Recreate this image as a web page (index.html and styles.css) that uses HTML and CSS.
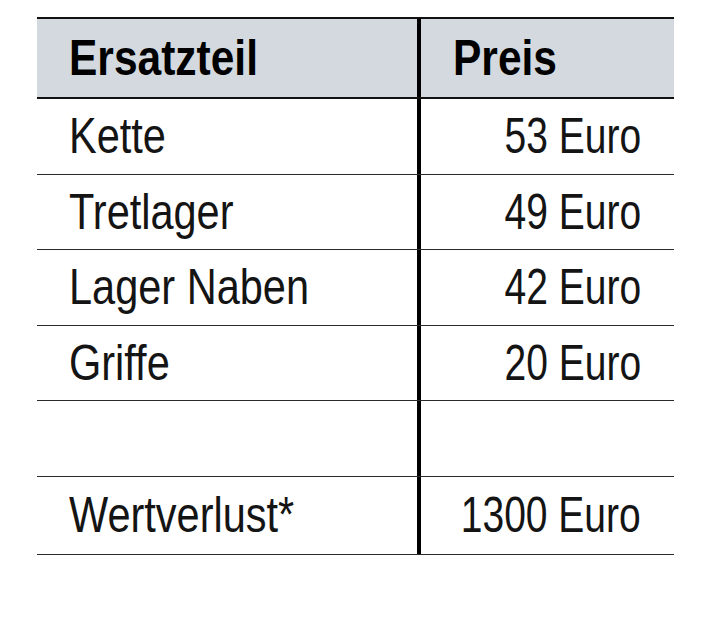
FILE: index.html
```html
<!DOCTYPE html>
<html lang="de">
<head>
<meta charset="utf-8">
<title>Ersatzteile</title>
<link rel="stylesheet" href="styles.css">
</head>
<body>
<div class="table">
  <div class="row head">
    <div class="cell name"><span class="txt">Ersatzteil</span></div>
    <div class="cell price"><span class="txt">Preis</span></div>
  </div>
  <div class="row">
    <div class="cell name"><span class="txt">Kette</span></div>
    <div class="cell price"><span class="txt">53 Euro</span></div>
  </div>
  <div class="row">
    <div class="cell name"><span class="txt">Tretlager</span></div>
    <div class="cell price"><span class="txt">49 Euro</span></div>
  </div>
  <div class="row">
    <div class="cell name"><span class="txt">Lager Naben</span></div>
    <div class="cell price"><span class="txt">42 Euro</span></div>
  </div>
  <div class="row">
    <div class="cell name"><span class="txt">Griffe</span></div>
    <div class="cell price"><span class="txt">20 Euro</span></div>
  </div>
  <div class="row">
    <div class="cell name"></div>
    <div class="cell price"></div>
  </div>
  <div class="row last">
    <div class="cell name"><span class="txt">Wertverlust*</span></div>
    <div class="cell price"><span class="txt">1300 Euro</span></div>
  </div>
</div>
</body>
</html>
```

FILE: styles.css
```css
html, body {
  margin: 0;
  padding: 0;
  background: #ffffff;
}

body {
  font-family: "Liberation Sans", Arial, sans-serif;
  color: #141414;
}

.table {
  width: 637px;
  margin: 17px 0 0 37px;
  border-top: 2px solid #111;
}

.row {
  display: flex;
  box-sizing: border-box;
  height: 75.5px;
  border-bottom: 1.5px solid #2a2a2a;
}

.row.head {
  height: 80px;
  background: #d3d9df;
  border-bottom: 2.5px solid #111;
}

.row.last {
  height: 78px;
}

.cell {
  display: flex;
  align-items: center;
  box-sizing: border-box;
  font-size: 50px;
  line-height: 1;
  white-space: nowrap;
  overflow: visible;
}

.txt {
  display: inline-block;
}

.cell.name {
  flex: 0 0 384px;
  width: 384px;
  padding-left: 32px;
  border-right: 4.5px solid #000;
}

.cell.name .txt {
  transform: scaleX(0.83);
  transform-origin: left center;
}

.cell.price {
  flex: 1 1 0;
  min-width: 0;
  justify-content: flex-end;
  padding-right: 33px;
}

.cell.price .txt {
  transform: scaleX(0.78);
  transform-origin: right center;
}

.head .cell {
  font-weight: bold;
  color: #000;
}

.head .cell .txt {
  transform: scaleX(0.85);
  transform-origin: left center;
}

.head .cell.price {
  justify-content: flex-start;
  padding-left: 32px;
  padding-right: 0;
}
```
